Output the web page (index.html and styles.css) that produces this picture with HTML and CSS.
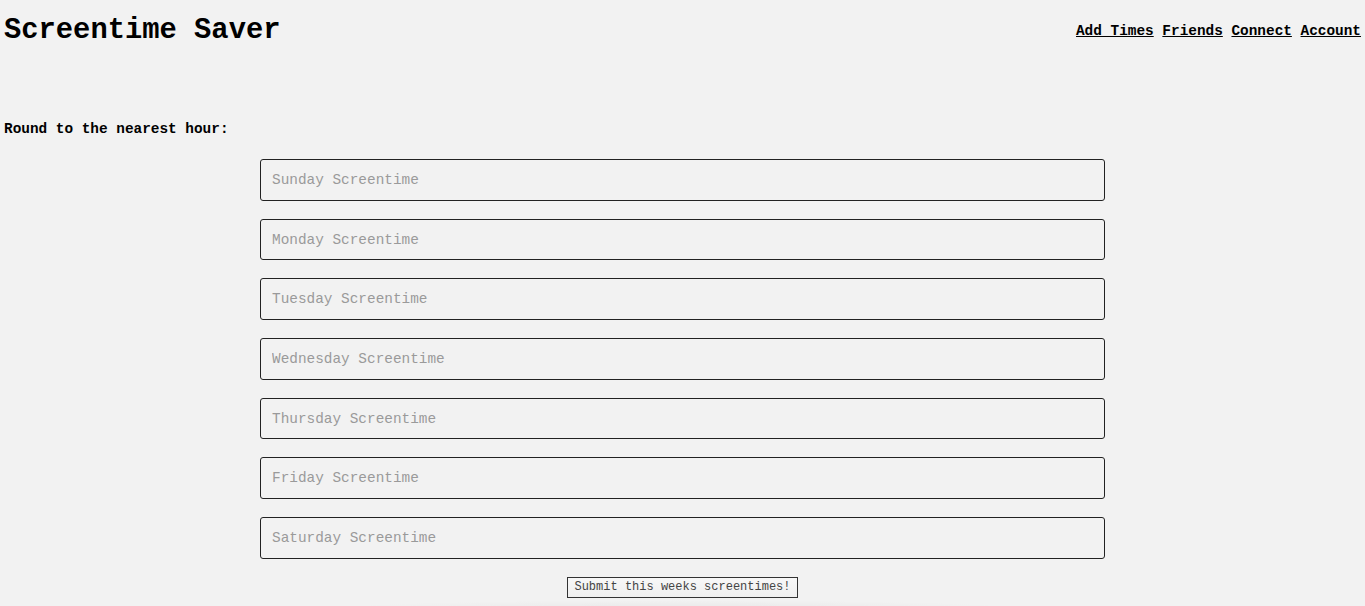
FILE: index.html
```html
<!DOCTYPE html>
<html>
<head>
<meta charset="utf-8">
<title>Screentime Saver</title>
<link rel="stylesheet" href="styles.css">
</head>
<body>
<header class="topbar">
  <h1 class="brand">Screentime Saver</h1>
  <nav class="nav">
    <a href="#">Add Times</a> <a href="#">Friends</a> <a href="#">Connect</a> <a href="#">Account</a>
  </nav>
</header>
<main class="content">
  <p class="hint">Round to the nearest hour:</p>
  <form class="times">
    <input class="field" type="text" placeholder="Sunday Screentime">
    <input class="field" type="text" placeholder="Monday Screentime">
    <input class="field" type="text" placeholder="Tuesday Screentime">
    <input class="field" type="text" placeholder="Wednesday Screentime">
    <input class="field" type="text" placeholder="Thursday Screentime">
    <input class="field" type="text" placeholder="Friday Screentime">
    <input class="field" type="text" placeholder="Saturday Screentime">
    <button class="submit" type="button">Submit this weeks screentimes!</button>
  </form>
</main>
<div class="glow"></div>
</body>
</html>
```

FILE: styles.css
```css
html, body {
  margin: 0;
  padding: 0;
  background: #f2f2f2;
  height: 100%;
  overflow: hidden;
}
body {
  font-family: "Liberation Mono", "Courier New", monospace;
  color: #000;
  position: relative;
}
.topbar {
  display: flex;
  justify-content: space-between;
  align-items: flex-start;
  padding: 0 4px;
}
.brand {
  margin: 14px 0 0 0;
  font-size: 28.8px;
  font-weight: bold;
  line-height: 33px;
}
.nav {
  margin-top: 22px;
  font-size: 14.4px;
  font-weight: bold;
  line-height: 18px;
}
.nav a {
  color: #000;
  text-decoration: underline;
}
.content {
  padding: 0 4px;
}
.hint {
  margin: 73px 0 0 0;
  font-size: 14.4px;
  font-weight: bold;
  line-height: 18px;
}
.times {
  display: flex;
  flex-direction: column;
  align-items: center;
  gap: 18px;
  margin-top: 21px;
}
.field {
  box-sizing: border-box;
  width: 845px;
  height: 41.7px;
  margin: 0;
  padding: 0 11px;
  border: 1px solid #222;
  border-radius: 3px;
  background: #f2f2f2;
  font-family: "Liberation Mono", "Courier New", monospace;
  font-size: 14.4px;
  color: #000;
}
.field::placeholder {
  color: #9a9a9a;
}
.submit {
  margin-top: 0;
  box-sizing: border-box;
  height: 21px;
  padding: 0 6px;
  border: 1px solid #333;
  border-radius: 0;
  background: linear-gradient(#f8f8f8, #efefef);
  font-family: "Liberation Mono", "Courier New", monospace;
  font-size: 12px;
  color: #444;
}
.glow {
  position: absolute;
  left: 330px;
  right: 335px;
  bottom: -10px;
  height: 16px;
  border-radius: 50%;
  background: radial-gradient(ellipse at center, rgba(0,0,0,0.04), rgba(0,0,0,0) 70%);
}
```
